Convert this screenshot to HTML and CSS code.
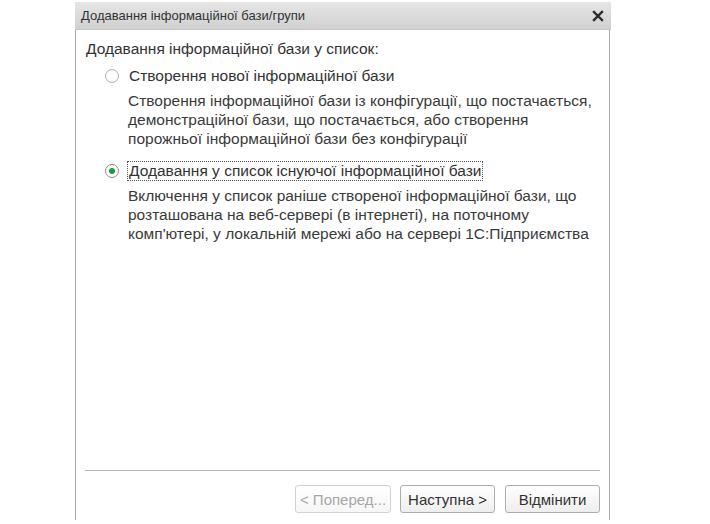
FILE: index.html
```html
<!DOCTYPE html>
<html lang="uk">
<head>
<meta charset="utf-8">
<title>Додавання інформаційної бази/групи</title>
<link rel="stylesheet" href="styles.css">
</head>
<body>
<div class="dialog">
  <div class="titlebar">
    <span class="title">Додавання інформаційної бази/групи</span>
    <svg class="close" width="12" height="12" viewBox="0 0 12 12"><path d="M2 2 L10 10 M10 2 L2 10" stroke="#2a2a2a" stroke-width="2.4" stroke-linecap="square"/></svg>
  </div>
  <div class="content">
    <div class="heading">Додавання інформаційної бази у список:</div>
    <div class="option">
      <div class="opt-row">
        <span class="radio"></span>
        <span class="opt-label">Створення нової інформаційної бази</span>
      </div>
      <div class="desc">Створення інформаційної бази із конфігурації, що постачається,<br>демонстраційної бази, що постачається, або створення<br>порожньої інформаційної бази без конфігурації</div>
    </div>
    <div class="option">
      <div class="opt-row">
        <span class="radio checked"></span>
        <span class="opt-label focus">Додавання у список існуючої інформаційної бази</span>
      </div>
      <div class="desc">Включення у список раніше створеної інформаційної бази, що<br>розташована на веб-сервері (в інтернеті), на поточному<br>комп'ютері, у локальній мережі або на сервері 1С:Підприємства</div>
    </div>
    <div class="spacer"></div>
    <div class="separator"></div>
    <div class="buttons">
      <button class="btn disabled">&lt; Поперед...</button>
      <button class="btn">Наступна &gt;</button>
      <button class="btn">Відмінити</button>
    </div>
  </div>
</div>
</body>
</html>
```

FILE: styles.css
```css
html, body {
  margin: 0;
  padding: 0;
  background: #ffffff;
}
body {
  font-family: "Liberation Sans", Arial, sans-serif;
  color: #3a3a3a;
}
.dialog {
  margin: 2px 0 0 75px;
  width: 536px;
  height: 518px;
  display: flex;
  flex-direction: column;
  box-sizing: border-box;
}
.titlebar {
  height: 28px;
  flex: none;
  background: linear-gradient(#e6e6e6, #d0d0d0);
  display: flex;
  align-items: center;
  justify-content: space-between;
  padding: 0 7px 0 6px;
  border-bottom: 1px solid #c4c4c4;
  box-sizing: border-box;
}
.title {
  font-size: 13px;
  color: #333;
}
.close {
  display: block;
}
.content {
  flex: 1;
  display: flex;
  flex-direction: column;
  border-left: 1px solid #a8a8a8;
  border-right: 1px solid #a8a8a8;
  margin-right: 1px;
  padding: 9px 9px 7px 10px;
}
.heading {
  font-size: 15.5px;
  line-height: 19px;
  color: #333;
}
.option {
  margin-top: 8px;
  padding-left: 20px;
}
.option + .option {
  margin-top: 13px;
}
.opt-row {
  display: flex;
  align-items: center;
  height: 20px;
  margin-left: -1px;
}
.radio {
  width: 14px;
  height: 14px;
  border: 1.5px solid #b0b0b0;
  border-radius: 50%;
  box-sizing: border-box;
  background: #fff;
  margin-right: 10px;
  position: relative;
  flex: none;
}
.radio.checked {
  border-color: #8c8c8c;
}
.radio.checked::after {
  content: "";
  position: absolute;
  left: 2.5px;
  top: 2.5px;
  width: 6px;
  height: 6px;
  border-radius: 50%;
  background: #1f9b3c;
}
.opt-label {
  font-size: 15.5px;
  line-height: 18px;
  color: #333;
  border: 1px solid transparent;
  padding: 0 1px;
  margin-left: -2px;
}
.opt-label.focus {
  border: 1px dotted #555;
}
.desc {
  margin-top: 5px;
  padding-left: 22px;
  font-size: 15.5px;
  line-height: 19px;
  color: #3a3a3a;
  white-space: nowrap;
}
.spacer {
  flex: 1;
}
.separator {
  height: 1px;
  background: #b8b8b8;
  margin: 0 0 14px -1px;
}
.buttons {
  display: flex;
  justify-content: flex-end;
  gap: 9px;
}
.btn {
  width: 96px;
  height: 28px;
  font-family: "Liberation Sans", Arial, sans-serif;
  font-size: 15px;
  color: #333;
  border: 1px solid #adadad;
  border-radius: 3px;
  background: linear-gradient(#ffffff, #eeeeee);
  padding: 0;
}
.btn + .btn {
  width: 95px;
}
.btn:last-child {
  margin-left: 1px;
}
.btn.disabled {
  color: #a6a6a6;
  border-color: #d2d2d2;
  background: linear-gradient(#ffffff, #f6f6f6);
}
```
